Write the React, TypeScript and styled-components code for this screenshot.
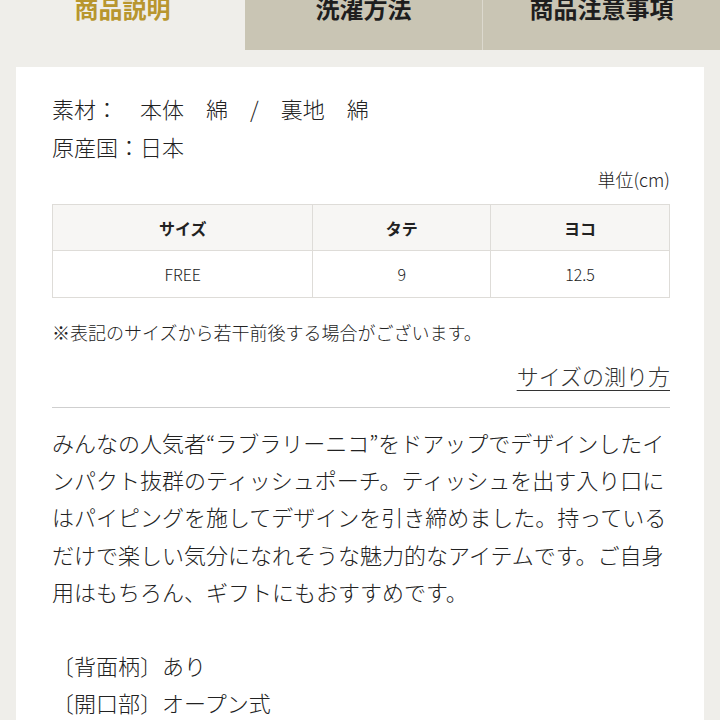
import React from "react";
import styled, { createGlobalStyle } from "styled-components";

const Global = createGlobalStyle`
  html, body { margin: 0; padding: 0; background: #efeeea; }
  body { font-family: "Noto Sans CJK JP", "Noto Sans", sans-serif; color: #222; overflow: hidden; }
  * { box-sizing: border-box; }
`;

const Page = styled.div`
  width: 720px;
  height: 720px;
  overflow: hidden;
  background: #efeeea;
`;

const TabBar = styled.div`
  display: grid;
  grid-template-columns: 245px 237px 238px;
  height: 50px;
`;

const Tab = styled.div<{ $active?: boolean; $divider?: boolean }>`
  display: flex;
  justify-content: center;
  align-items: flex-start;
  height: 50px;
  font-size: 24px;
  font-weight: 700;
  line-height: 16px;
  background: ${(p) => (p.$active ? "#efeeea" : "#c9c5b4")};
  color: ${(p) => (p.$active ? "#b8962e" : "#1e1e1e")};
  border-left: ${(p) => (p.$divider ? "1px solid #dcd9ce" : "none")};
`;

const Card = styled.div`
  margin: 17px 16px 0 16px;
  background: #fff;
  padding: 22px 34px 40px 36px;
  font-weight: 300;
`;

const Line = styled.div`
  font-size: 22px;
  line-height: 38px;
  white-space: pre;
`;

const Unit = styled.div`
  text-align: right;
  font-size: 18px;
  line-height: 26px;
  margin-top: 1px;
`;

const Table = styled.table`
  width: 100%;
  margin-top: 12px;
  border-collapse: collapse;
  font-size: 16px;
  table-layout: fixed;
`;

const Th = styled.th`
  height: 46px;
  background: #f7f6f4;
  border: 1px solid #dedcd8;
  font-weight: 700;
  text-align: center;
`;

const Td = styled.td`
  height: 47px;
  border: 1px solid #dedcd8;
  text-align: center;
  font-weight: 300;
`;

const Note = styled.div`
  margin-top: 21px;
  font-size: 18px;
  line-height: 26px;
`;

const LinkRow = styled.div`
  margin-top: 15px;
  text-align: right;
  line-height: 30px;
`;

const SizeLink = styled.a`
  font-size: 22px;
  color: #333;
  text-decoration: underline;
  text-underline-offset: 5px;
  text-decoration-thickness: 1px;
`;

const Rule = styled.hr`
  margin: 14px 0 0 0;
  border: none;
  border-top: 1px solid #cfcfcf;
`;

const Paragraph = styled.p`
  margin: 16px 0 0 0;
  font-size: 22px;
  line-height: 37.2px;
`;

const Spec = styled.div<{ $gap?: boolean }>`
  font-size: 22px;
  line-height: 37.2px;
  margin-top: ${(p) => (p.$gap ? "37.2px" : "0")};
`;

export default function App() {
  return (
    <Page>
      <Global />
      <TabBar>
        <Tab $active>商品説明</Tab>
        <Tab>洗濯方法</Tab>
        <Tab $divider>商品注意事項</Tab>
      </TabBar>
      <Card>
        <Line>素材：　本体　綿　/　裏地　綿</Line>
        <Line>原産国：日本</Line>
        <Unit>単位(cm)</Unit>
        <Table>
          <colgroup>
            <col style={{ width: "42.2%" }} />
            <col style={{ width: "28.8%" }} />
            <col style={{ width: "29%" }} />
          </colgroup>
          <thead>
            <tr>
              <Th>サイズ</Th>
              <Th>タテ</Th>
              <Th>ヨコ</Th>
            </tr>
          </thead>
          <tbody>
            <tr>
              <Td>FREE</Td>
              <Td>9</Td>
              <Td>12.5</Td>
            </tr>
          </tbody>
        </Table>
        <Note>※表記のサイズから若干前後する場合がございます。</Note>
        <LinkRow>
          <SizeLink>サイズの測り方</SizeLink>
        </LinkRow>
        <Rule />
        <Paragraph>
          みんなの人気者“ラブラリーニコ”をドアップでデザインしたインパクト抜群のティッシュポーチ。ティッシュを出す入り口にはパイピングを施してデザインを引き締めました。持っているだけで楽しい気分になれそうな魅力的なアイテムです。ご自身用はもちろん、ギフトにもおすすめです。
        </Paragraph>
        <Spec $gap>〔背面柄〕あり</Spec>
        <Spec>〔開口部〕オープン式</Spec>
      </Card>
    </Page>
  );
}
